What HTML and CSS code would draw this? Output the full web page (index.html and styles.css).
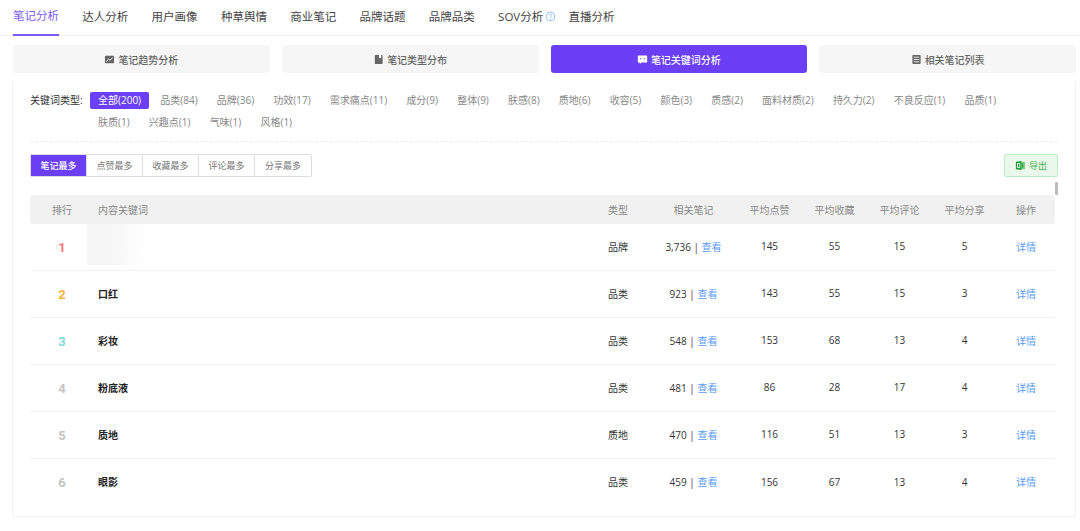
FILE: index.html
```html
<!DOCTYPE html>
<html lang="zh-CN">

<head>
    <meta charset="UTF-8">
    <title>笔记分析</title>
    <link rel="stylesheet" href="styles.css">
</head>

<body>
    <!-- Top navigation -->
    <nav class="nav">
        <a class="nav-item active">笔记分析</a>
        <a class="nav-item">达人分析</a>
        <a class="nav-item">用户画像</a>
        <a class="nav-item">种草舆情</a>
        <a class="nav-item">商业笔记</a>
        <a class="nav-item">品牌话题</a>
        <a class="nav-item">品牌品类</a>
        <a class="nav-item">SOV分析
            <svg class="help" viewBox="0 0 12 12"><circle cx="6" cy="6" r="4.6" fill="none" stroke="#8fbdf7" stroke-width="1.1"/><path d="M4.6 4.9C4.7 3.2 7.5 3.2 7.5 4.9 7.5 6 6 5.9 6 7.1" fill="none" stroke="#8fbdf7" stroke-width="1"/><circle cx="6" cy="8.6" r=".6" fill="#8fbdf7"/></svg>
        </a>
        <a class="nav-item">直播分析</a>
    </nav>

    <!-- Section switch -->
    <div class="sections">
        <a class="section-btn">
            <svg viewBox="0 0 12 12"><rect x="1" y="2" width="10" height="8" rx="1" fill="#666"/><path d="M2.5 8 5 5.6 6.5 6.8 9.5 4" fill="none" stroke="#fff" stroke-width="1"/></svg>
            笔记趋势分析
        </a>
        <a class="section-btn">
            <svg viewBox="0 0 12 12"><rect x="2" y="1" width="8.5" height="10" rx="1" fill="#666"/><path d="M6.5 1h2.5v4L7.8 4.1 6.5 5z" fill="#fff"/></svg>
            笔记类型分布
        </a>
        <a class="section-btn active">
            <svg viewBox="0 0 12 12"><path d="M1.5 1.5h9a.6.6 0 0 1 .6.6v6.6a.6.6 0 0 1-.6.6H5L3 11V9.3H1.5a.6.6 0 0 1-.6-.6V2.1a.6.6 0 0 1 .6-.6z" fill="#fff"/><rect x="3.4" y="4.6" width="1.2" height="1.2" fill="#6a3ff5"/><rect x="7.2" y="4.6" width="1.2" height="1.2" fill="#6a3ff5"/></svg>
            笔记关键词分析
        </a>
        <a class="section-btn">
            <svg viewBox="0 0 12 12"><rect x="1.5" y="1" width="9" height="10" rx=".8" fill="#666"/><path d="M3 3.5h6M3 6h6M3 8.5h6" stroke="#fff" stroke-width=".9"/></svg>
            相关笔记列表
        </a>
    </div>

    <div class="panel">
        <!-- Keyword type filter -->
        <div class="filter">
            <span class="filter-label">关键词类型:</span>
            <div class="chips">
                <span class="chip active">全部(200)</span>
                <span class="chip">品类(84)</span>
                <span class="chip">品牌(36)</span>
                <span class="chip">功效(17)</span>
                <span class="chip">需求痛点(11)</span>
                <span class="chip">成分(9)</span>
                <span class="chip">整体(9)</span>
                <span class="chip">肤感(8)</span>
                <span class="chip">质地(6)</span>
                <span class="chip">收容(5)</span>
                <span class="chip">颜色(3)</span>
                <span class="chip">质感(2)</span>
                <span class="chip">面料材质(2)</span>
                <span class="chip">持久力(2)</span>
                <span class="chip">不良反应(1)</span>
                <span class="chip">品质(1)</span>
                <span class="chip">肤质(1)</span>
                <span class="chip">兴趣点(1)</span>
                <span class="chip">气味(1)</span>
                <span class="chip">风格(1)</span>
            </div>
        </div>

        <!-- Sort + export -->
        <div class="toolbar">
            <div class="sort-group">
                <span class="sort-btn active">笔记最多</span>
                <span class="sort-btn">点赞最多</span>
                <span class="sort-btn">收藏最多</span>
                <span class="sort-btn">评论最多</span>
                <span class="sort-btn">分享最多</span>
            </div>
            <a class="export-btn">
                <svg viewBox="0 0 12 12"><rect x="5" y="2" width="6" height="8" rx=".6" fill="#7fd08a"/><path d="M1 1.8 7 1v10l-6-.8z" fill="#1f9d3a"/><path d="M8.3 3.5v5" stroke="#1f9d3a" stroke-width="1.2"/><rect x="2.7" y="4" width="2.6" height="4" fill="none" stroke="#fff" stroke-width=".9"/></svg>
                导出
            </a>
        </div>

        <!-- Keyword table -->
        <div class="table-wrap">
            <span class="scroll-thumb"></span>
            <div class="row head">
                <span>排行</span>
                <span class="left">内容关键词</span>
                <span class="left">类型</span>
                <span>相关笔记</span>
                <span>平均点赞</span>
                <span>平均收藏</span>
                <span>平均评论</span>
                <span>平均分享</span>
                <span>操作</span>
            </div>
            <div class="row">
                <span class="rank rank-1">1</span>
                <span class="left keyword top"><i class="blurred"></i></span>
                <span class="left">品牌</span>
                <span>3,736 <b class="sep sep-dark">|</b> <a class="link">查看</a></span>
                <span>145</span><span>55</span><span>15</span><span>5</span>
                <span><a class="link">详情</a></span>
            </div>
            <div class="row">
                <span class="rank rank-2">2</span>
                <span class="left keyword">口红</span>
                <span class="left">品类</span>
                <span>923 <b class="sep">|</b> <a class="link">查看</a></span>
                <span>143</span><span>55</span><span>15</span><span>3</span>
                <span><a class="link">详情</a></span>
            </div>
            <div class="row">
                <span class="rank rank-3">3</span>
                <span class="left keyword">彩妆</span>
                <span class="left">品类</span>
                <span>548 <b class="sep">|</b> <a class="link">查看</a></span>
                <span>153</span><span>68</span><span>13</span><span>4</span>
                <span><a class="link">详情</a></span>
            </div>
            <div class="row">
                <span class="rank">4</span>
                <span class="left keyword">粉底液</span>
                <span class="left">品类</span>
                <span>481 <b class="sep">|</b> <a class="link">查看</a></span>
                <span>86</span><span>28</span><span>17</span><span>4</span>
                <span><a class="link">详情</a></span>
            </div>
            <div class="row">
                <span class="rank">5</span>
                <span class="left keyword">质地</span>
                <span class="left">质地</span>
                <span>470 <b class="sep">|</b> <a class="link">查看</a></span>
                <span>116</span><span>51</span><span>13</span><span>3</span>
                <span><a class="link">详情</a></span>
            </div>
            <div class="row last">
                <span class="rank">6</span>
                <span class="left keyword">眼影</span>
                <span class="left">品类</span>
                <span>459 <b class="sep">|</b> <a class="link">查看</a></span>
                <span>156</span><span>67</span><span>13</span><span>4</span>
                <span><a class="link">详情</a></span>
            </div>
        </div>
    </div>
</body>

</html>
```

FILE: styles.css
```css
:root {
    --primary-color: #6a3ff5;
    --text-color: #333;
    --muted-color: #888;
    --line-color: #f1f1f1;
}

body {
    margin: 0;
    height: 531px;
    overflow: hidden;
    background: #fff;
    color: var(--text-color);
    font-family: "Open Sans", "Noto Sans CJK SC", sans-serif;
    font-size: 10px;
}

/* Top navigation */
.nav {
    display: flex;
    gap: 23.3px;
    height: 35px;
    padding-left: 13px;
    border-bottom: 1px solid #eee;
}

.nav-item {
    display: flex;
    align-items: center;
    height: 33px;
    padding-bottom: 1px;
    box-sizing: border-box;
    font-size: 11.5px;
    color: #444;
    white-space: nowrap;
}

.nav-item.active {
    color: #7c5cf5;
    height: 36px;
    padding-bottom: 4px;
    border-bottom: 2px solid #7c5cf5;
}

.help {
    width: 11px;
    height: 11px;
    margin: 0 -11px 0 2px;
}

/* Section switch */
.sections {
    display: grid;
    grid-template-columns: repeat(4, 1fr);
    gap: 12px;
    margin: 9px 4px 0 13px;
}

.section-btn {
    display: flex;
    align-items: center;
    justify-content: center;
    gap: 3px;
    height: 28px;
    border-radius: 3px;
    background: #f6f6f6;
    color: #666;
    font-weight: 500;
}

.section-btn svg {
    width: 11px;
    height: 11px;
}

.section-btn.active {
    background: var(--primary-color);
    color: #fff;
}

/* Panel */
.panel {
    margin: 8px 4px 0 12px;
    padding: 11px 17px 0;
    height: 424px;
    border: 1px solid var(--line-color);
    border-top: none;
    border-radius: 0 0 3px 3px;
}

.filter {
    display: flex;
    padding-bottom: 10px;
    border-bottom: 1px dashed #eee;
}

.filter-label {
    flex: 0 0 60px;
    line-height: 17px;
}

.chips {
    display: flex;
    flex-wrap: wrap;
    gap: 5px 3.2px;
    padding-right: 10px;
}

.chip {
    padding: 0 8px;
    height: 17px;
    line-height: 17px;
    border-radius: 2px;
    color: var(--muted-color);
    white-space: nowrap;
}

.chip.active {
    background: var(--primary-color);
    color: #fff;
}

/* Sort + export */
.toolbar {
    display: flex;
    justify-content: space-between;
    margin-top: 12px;
}

.sort-group {
    display: flex;
    height: 23px;
    border: 1px solid #ddd;
    border-radius: 2px;
    box-sizing: border-box;
}

.sort-btn {
    width: 56px;
    line-height: 21px;
    text-align: center;
    font-size: 9px;
    color: #777;
    border-right: 1px solid #ddd;
    box-sizing: border-box;
}

.sort-btn:last-child {
    border-right: none;
}

.sort-btn.active {
    background: var(--primary-color);
    color: #fff;
    font-weight: 500;
}

.export-btn {
    display: flex;
    align-items: center;
    justify-content: center;
    gap: 3px;
    width: 54px;
    height: 23px;
    box-sizing: border-box;
    border: 1px solid #b9edc4;
    border-radius: 2px;
    background: #e9f8eb;
    color: #4caf50;
    font-size: 9px;
}

.export-btn svg {
    width: 11px;
    height: 11px;
}

/* Table */
.table-wrap {
    position: relative;
    margin: 18px 3px 0 0;
}

.scroll-thumb {
    position: absolute;
    right: -3px;
    top: -13px;
    width: 3px;
    height: 13px;
    border-radius: 1px;
    background: #bbb;
}

.row {
    display: grid;
    grid-template-columns: 64px 510px 46px 87px 65px 65px 65px 65px 58px;
    align-items: center;
    height: 47px;
    padding-bottom: 2px;
    box-sizing: border-box;
    border-bottom: 1px solid var(--line-color);
    text-align: center;
}

.row.last {
    border-bottom: none;
}

.row.head {
    height: 29px;
    padding-bottom: 0;
    border-bottom: none;
    border-radius: 3px;
    background: #f1f1f1;
    color: var(--muted-color);
}

.left {
    padding-left: 4px;
    text-align: left;
}

.keyword {
    font-weight: 700;
    color: #222;
}

.top {
    align-self: start;
}

.blurred {
    display: block;
    width: 58px;
    height: 41px;
    margin-left: -11px;
    background: linear-gradient(90deg, #f6f6f6, #f7f7f7 50%, #fff);
}

.rank {
    padding-top: 2px;
    font-family: Roboto, sans-serif;
    font-size: 13px;
    font-weight: 700;
    color: #c4c4c4;
}

.rank-1 {
    color: #f87575;
}

.rank-2 {
    color: #f6b139;
}

.rank-3 {
    color: #7fdcd8;
}

.link {
    color: #5a9bf6;
}

.sep {
    color: #9a7f9c;
}

.sep-dark {
    color: #444;
    font-weight: 400;
}
```
